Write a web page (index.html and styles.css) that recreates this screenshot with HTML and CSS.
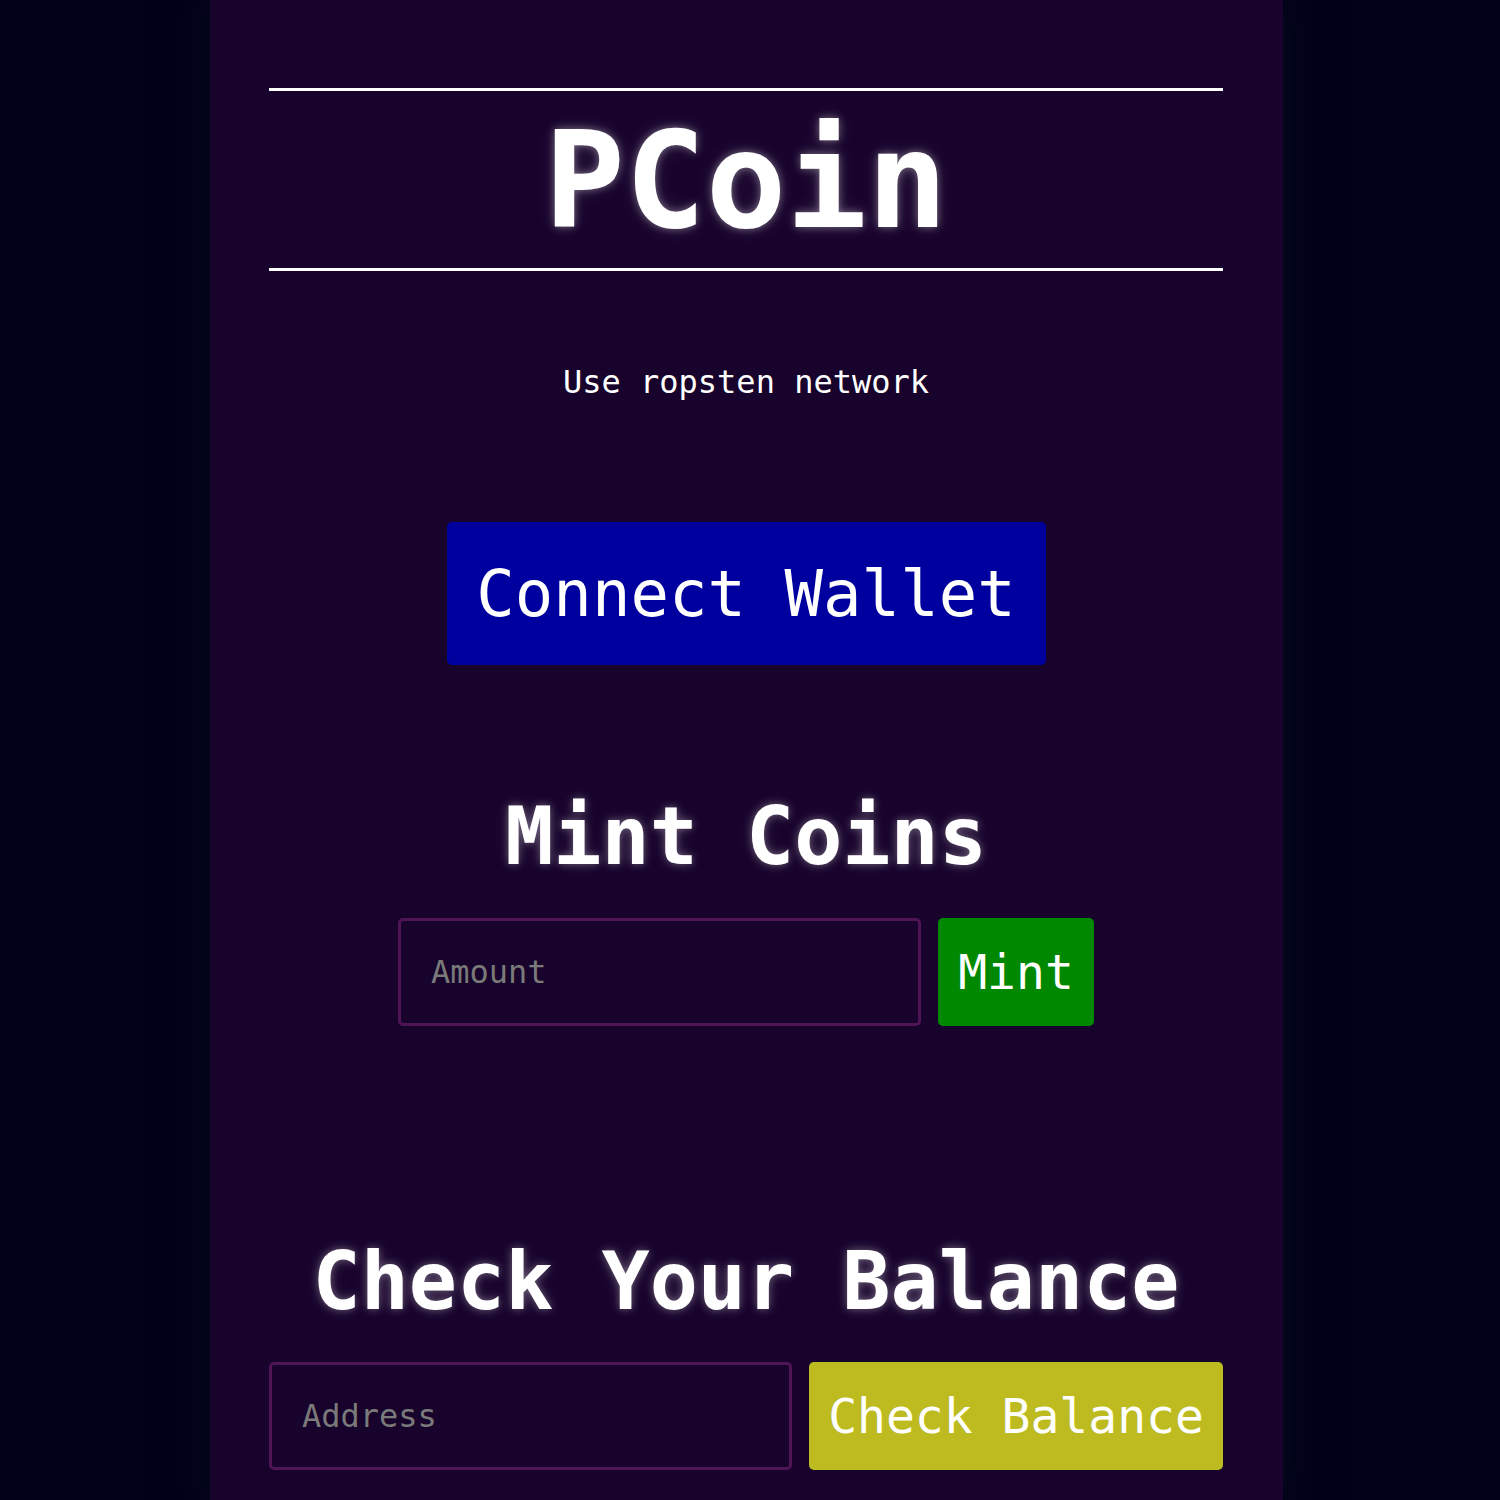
FILE: index.html
```html
<!DOCTYPE html>
<html lang="en">
<head>
<meta charset="utf-8">
<title>PCoin</title>
<link rel="stylesheet" href="styles.css">
</head>
<body>
  <main class="app">
    <header class="masthead">
      <h1 class="title">PCoin</h1>
    </header>
    <p class="network">Use ropsten network</p>
    <div class="connect-wrap">
      <button class="btn btn-connect">Connect Wallet</button>
    </div>
    <section class="section section-mint">
      <h2 class="heading">Mint Coins</h2>
      <div class="row row-mint">
        <input class="field" type="text" placeholder="Amount">
        <button class="btn btn-mint">Mint</button>
      </div>
    </section>
    <section class="section section-balance">
      <h2 class="heading">Check Your Balance</h2>
      <div class="row row-balance">
        <input class="field" type="text" placeholder="Address">
        <button class="btn btn-check">Check Balance</button>
      </div>
    </section>
  </main>
</body>
</html>
```

FILE: styles.css
```css
html, body {
  margin: 0;
  padding: 0;
}

body {
  background: #02011a;
  font-family: "DejaVu Sans Mono", "Liberation Mono", monospace;
  color: #ffffff;
  min-height: 1500px;
}

.app {
  width: 1073px;
  min-height: 1500px;
  margin-left: 210px;
  box-sizing: border-box;
  padding: 88px 60px 0 59px;
  background: #17032b;
  box-shadow: 0 0 40px 6px rgba(8, 16, 28, 0.55);
}

.masthead {
  border-top: 3px solid #ffffff;
  border-bottom: 3px solid #ffffff;
  padding-top: 3px;
}

.title {
  margin: 0;
  text-align: center;
  font-size: 134px;
  font-weight: bold;
  line-height: 174px;
  letter-spacing: 0;
  text-shadow: 0 0 8px rgba(255, 255, 255, 0.4), 0 0 20px rgba(255, 255, 255, 0.12);
}

.network {
  margin: 91px 0 0;
  text-align: center;
  font-size: 32px;
  line-height: 40px;
}

.connect-wrap {
  display: flex;
  justify-content: center;
  margin-top: 120px;
}

.btn {
  border: none;
  border-radius: 5px;
  color: #ffffff;
  font-family: "DejaVu Sans Mono", "Liberation Mono", monospace;
  white-space: nowrap;
  box-sizing: border-box;
  cursor: pointer;
}

.btn-connect {
  background: #00009f;
  font-size: 64px;
  line-height: 75px;
  padding: 35px 0 33px;
  width: 599px;
  height: 143px;
}

.section-mint {
  margin-top: 124px;
}

.section-balance {
  margin-top: 208px;
}

.heading {
  margin: 0;
  text-align: center;
  font-size: 80px;
  font-weight: bold;
  line-height: 96px;
  text-shadow: 0 0 8px rgba(255, 255, 255, 0.35), 0 0 18px rgba(255, 255, 255, 0.1);
}

.row {
  display: flex;
  justify-content: center;
  gap: 17px;
  margin-top: 33px;
}

.row-balance {
  margin-top: 32px;
}

.field {
  width: 523px;
  height: 108px;
  box-sizing: border-box;
  border: 3px solid #4f1454;
  border-radius: 5px;
  background: transparent;
  padding: 0 30px;
  font-family: "DejaVu Sans Mono", "Liberation Mono", monospace;
  font-size: 32px;
  color: #ffffff;
  outline: none;
}

.field::placeholder {
  color: #7a7a7a;
}

.btn-mint {
  background: #008800;
  height: 108px;
  width: 156px;
  font-size: 48px;
  padding: 0;
}

.btn-check {
  background: #bdbb20;
  height: 108px;
  width: 414px;
  font-size: 48px;
  padding: 0;
}
```
